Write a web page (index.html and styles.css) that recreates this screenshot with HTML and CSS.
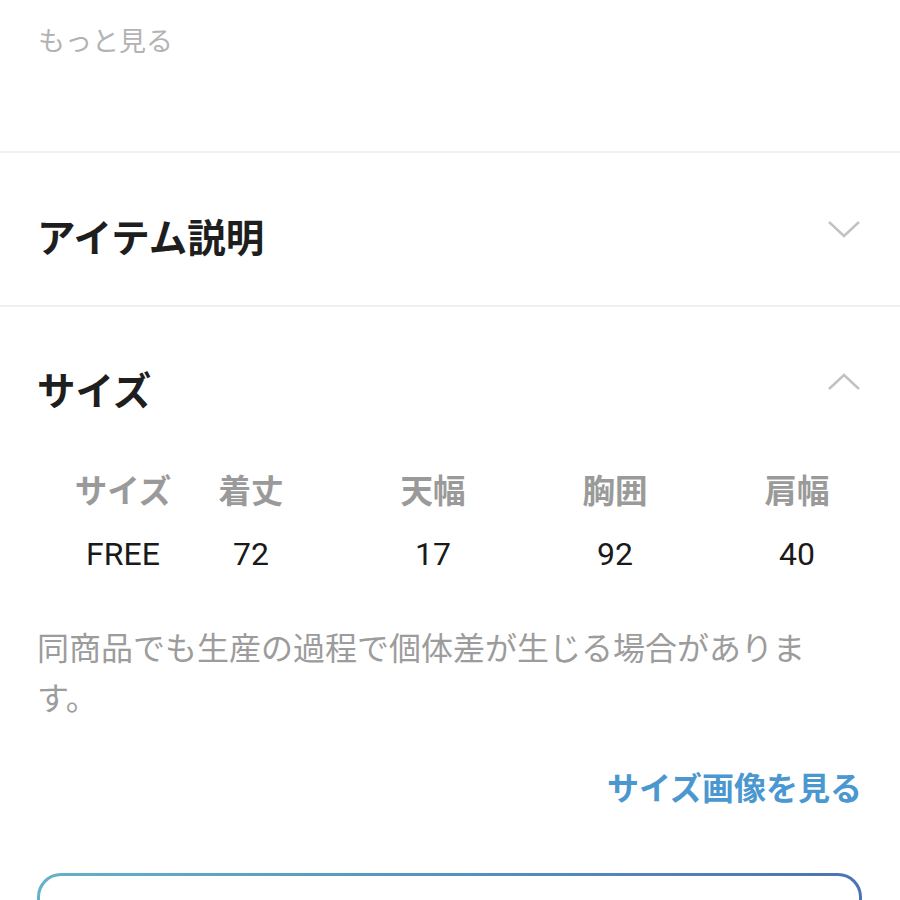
FILE: index.html
```html
<!DOCTYPE html>
<html lang="ja">
<head>
    <meta charset="UTF-8">
    <meta name="viewport" content="width=device-width, initial-scale=1.0">
    <title>アイテム詳細</title>
    <link rel="stylesheet" href="styles.css">
</head>
<body>
    <div class="more-block">
        <span class="more-link">もっと見る</span>
    </div>

    <div class="acc">
        <div class="acc-head">
            <h2>アイテム説明</h2>
            <svg class="chevron" width="34" height="20" viewBox="0 0 34 20">
                <polyline points="2,3 17,17 32,3" />
            </svg>
        </div>
    </div>

    <div class="acc open">
        <div class="acc-head">
            <h2>サイズ</h2>
            <svg class="chevron" width="34" height="20" viewBox="0 0 34 20">
                <polyline points="2,17 17,3 32,17" />
            </svg>
        </div>
        <div class="acc-body">
            <div class="size-table">
                <div class="th">サイズ</div>
                <div class="th">着丈</div>
                <div class="th">天幅</div>
                <div class="th">胸囲</div>
                <div class="th">肩幅</div>
                <div class="td">FREE</div>
                <div class="td">72</div>
                <div class="td">17</div>
                <div class="td">92</div>
                <div class="td">40</div>
            </div>
            <p class="note">同商品でも生産の過程で個体差が生じる場合があります。</p>
            <div class="size-link"><a href="#">サイズ画像を見る</a></div>
        </div>
    </div>

    <div class="cta-box"></div>
</body>
</html>
```

FILE: styles.css
```css
body {
    margin: 0;
    font-family: 'Noto Sans CJK JP', 'Noto Sans', sans-serif;
    color: #222;
    background: #fff;
    overflow: hidden;
}
.more-block {
    height: 153px;
    padding: 17px 38px 0;
    box-sizing: border-box;
    border-bottom: 2px solid #f0f0f0;
}
.more-link {
    font-size: 27px;
    line-height: 46px;
    color: #b3b3b3;
}
.acc {
    border-bottom: 2px solid #f0f0f0;
}
.acc.open {
    border-bottom: none;
}
.acc-head {
    height: 152px;
    padding: 0 38px;
    display: flex;
    align-items: center;
    justify-content: space-between;
}
.acc.open .acc-head {
    height: 150px;
}
.acc-head h2 {
    margin: 0 0 0 -1px;
    font-size: 38.5px;
    line-height: 1;
    font-weight: bold;
    color: #1e1e1e;
    padding-top: 12px;
}
.chevron {
    margin-right: 1px;
}
.chevron polyline {
    fill: none;
    stroke: #c2c2c2;
    stroke-width: 2.5;
}
.acc-body {
    padding: 0 38px;
}
.size-table {
    display: grid;
    grid-template-columns: 74px repeat(4, 182px);
    row-gap: 21px;
    margin: 10px 0 0 48px;
    width: 802px;
    justify-items: center;
}
.th {
    font-size: 32.5px;
    line-height: 44px;
    font-weight: bold;
    color: #9a9a9a;
    white-space: nowrap;
}
.td {
    font-family: Roboto, 'Noto Sans', sans-serif;
    font-size: 32px;
    line-height: 44px;
    color: #1a1a1a;
}
.note {
    margin: 45px 0 0 -1px;
    font-size: 32px;
    line-height: 50px;
    color: #9c9c9c;
}
.size-link {
    margin-top: 43px;
    text-align: right;
    line-height: 44px;
}
.size-link a {
    font-size: 32px;
    font-weight: bold;
    color: #4a98cf;
    text-decoration: none;
}
.cta-box {
    margin: 58px 38px 0 37px;
    height: 120px;
    border: 3px solid transparent;
    border-radius: 24px;
    background: linear-gradient(#fff, #fff) padding-box,
                linear-gradient(90deg, #62b2c8, #4c72b4) border-box;
}
```
